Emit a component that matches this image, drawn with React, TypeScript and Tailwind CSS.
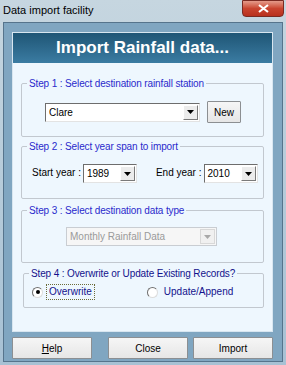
import { ReactNode } from 'react';

const font = { fontFamily: '"Liberation Sans", Arial, sans-serif' };

function Combo({ value, width, disabled = false }: { value: string; width: string; disabled?: boolean }) {
    return (
        <div
            className={`flex h-[19px] ${width} ${disabled
                ? 'border border-[#c9cdd2] bg-[#f6f6f6]'
                : 'border border-t-[#6d6d6d] border-l-[#6d6d6d] border-b-[#e3e3e3] border-r-[#e3e3e3] bg-white'}`}
        >
            <div className={`flex-1 flex items-center pl-[3px] text-[10px] ${disabled ? 'text-[#9a9a9a]' : 'text-black'}`}>
                {value}
            </div>
            <div
                className={`w-[15px] m-[1px] flex items-center justify-center ${disabled
                    ? 'bg-[#f0f0f0] border border-[#d8d8d8]'
                    : 'bg-[#ececec] border border-t-white border-l-white border-b-[#7a7a7a] border-r-[#7a7a7a]'}`}
            >
                <svg width="7" height="4" viewBox="0 0 7 4">
                    <path d="M0 0h7L3.5 4z" fill={disabled ? '#a8a8a8' : '#000'} />
                </svg>
            </div>
        </div>
    );
}

function Group({ title, children, className = '', legendColor = 'text-[#2a2acc]' }: { title: string; children: ReactNode; className?: string; legendColor?: string }) {
    return (
        <fieldset className={`border border-[#c2c8cf] rounded-[2px] ${className}`}>
            <legend className={`ml-[5px] px-[2px] text-[10px] leading-[13px] tracking-[-0.13px] ${legendColor}`}>{title}</legend>
            {children}
        </fieldset>
    );
}

function Radio({ checked, label, focused = false }: { checked: boolean; label: string; focused?: boolean }) {
    return (
        <div className="flex items-center gap-[3px]">
            <div className="w-[11px] h-[11px] rounded-full border border-t-[#6f6f6f] border-l-[#6f6f6f] border-b-[#dcdcdc] border-r-[#dcdcdc] bg-white flex items-center justify-center">
                {checked && <div className="w-[4px] h-[4px] rounded-full bg-black" />}
            </div>
            <span className={`text-[10px] leading-[12px] text-[#12128c] px-[2px] py-[1px] ${focused ? 'border border-dotted border-[#6b6b3a]' : 'border border-transparent'}`}>
                {label}
            </span>
        </div>
    );
}

function Button({ children, className = '' }: { children: ReactNode; className?: string }) {
    return (
        <button className={`h-[22px] border border-[#8c8f92] bg-gradient-to-b from-[#f6f6f6] to-[#e6e6e6] text-[10px] text-black rounded-[1px] ${className}`}>
            {children}
        </button>
    );
}

export default function App() {
    return (
        <div style={font} className="w-[286px] h-[365px] bg-gradient-to-b from-[#c6d6e0] to-[#a7c1d4] flex flex-col overflow-hidden">
            {/* Title bar */}
            <div className="h-[22px] flex items-start justify-between">
                <span className="pl-[3px] pt-[3px] text-[11px] leading-[14px] text-black">Data import facility</span>
                <div className="mr-[2px] w-[42px] h-[17px] rounded-b-[4px] border border-[#7a2a22] bg-gradient-to-b from-[#e49a8a] via-[#c9442f] to-[#b8301e] flex items-center justify-center">
                    <svg width="11" height="9" viewBox="0 0 11 9">
                        <path d="M1 1l9 7M10 1L1 8" stroke="#fff" strokeWidth="2.2" />
                    </svg>
                </div>
            </div>

            {/* Client area */}
            <div className="flex-1 mx-[3px] mb-[3px] border border-[#56748c] bg-[#80a6c1] pl-[8px] pr-[8px] pt-[9px] flex flex-col">
                <div className="w-[261px] border border-[#d8e6f0] flex flex-col">
                    <div className="h-[30px] bg-gradient-to-b from-[#1f5676] to-[#3b7ca2] flex items-center justify-center">
                        <span className="text-[17px] font-bold text-white">Import Rainfall data...</span>
                    </div>
                    <div className="h-[268px] bg-[#eef7fe] px-[8px] pt-[14px] flex flex-col">
                        <Group title="Step 1 : Select destination rainfall station" className="h-[60px]">
                            <div className="flex items-center pl-[23px] pt-[11px] gap-[7px]">
                                <Combo value="Clare" width="w-[155px]" />
                                <Button className="w-[34px] h-[18px]">New</Button>
                            </div>
                        </Group>
                        <Group title="Step 2 : Select year span to import" className="h-[59px] mt-[3px]">
                            <div className="flex items-center pl-[10px] pt-[11px]">
                                <span className="text-[10px] text-black mb-[3px]">Start year :</span>
                                <div className="ml-[2px]"><Combo value="1989" width="w-[54px]" /></div>
                                <span className="text-[10px] text-black mb-[3px] ml-[19px]">End year :</span>
                                <div className="ml-[2px]"><Combo value="2010" width="w-[54px]" /></div>
                            </div>
                        </Group>
                        <Group title="Step 3 : Select destination data type" className="h-[59px] mt-[5px]">
                            <div className="flex pl-[44px] pt-[10px]">
                                <Combo value="Monthly Rainfall Data" width="w-[151px]" disabled />
                            </div>
                        </Group>
                        <Group title="Step 4 : Overwrite or Update Existing Records?" legendColor="text-[#12128c]" className="h-[41px] mt-[4px] ml-[2px]">
                            <div className="flex items-center pl-[8px] pt-[4px]">
                                <Radio checked label="Overwrite" focused />
                                <div className="ml-[52px]"><Radio checked={false} label="Update/Append" /></div>
                            </div>
                        </Group>
                    </div>
                </div>
                <div className="flex mt-[5px]">
                    <Button className="w-[80px]"><span className="underline">H</span>elp</Button>
                    <Button className="w-[80px] ml-[16px]">Close</Button>
                    <Button className="w-[80px] ml-[5px]">Import</Button>
                </div>
            </div>
        </div>
    );
}
